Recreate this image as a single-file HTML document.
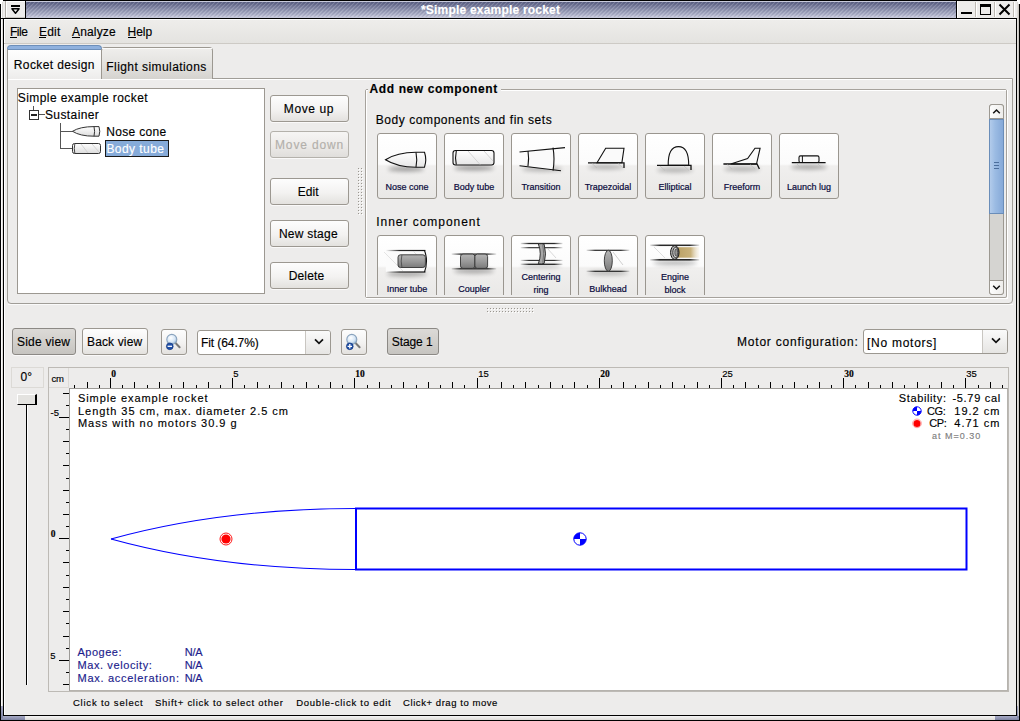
<!DOCTYPE html>
<html><head><meta charset="utf-8">
<style>
*{margin:0;padding:0;box-sizing:border-box}
html,body{width:1020px;height:721px;overflow:hidden;background:#edeceb;font-family:"Liberation Sans",sans-serif;color:#000}
.a{position:absolute}
.t{position:absolute;white-space:pre;line-height:1;font-family:"Liberation Sans",sans-serif;-webkit-text-stroke:0.15px currentColor}
.btn{position:absolute;border:1px solid #9c9891;border-radius:3px;box-shadow:0 1px 0 rgba(255,255,255,0.7);background:linear-gradient(#fdfdfd,#f3f2f1 55%,#e3e1de)}
.dis{background:linear-gradient(#f6f5f4,#eceae8 55%,#e0dedb);border-color:#b4b1ab}
.prs{background:linear-gradient(#dcdad7,#d2d0cc 50%,#c6c4c0);border-color:#8c8985}
.cb{position:absolute;border:1px solid #9c9891;border-radius:3px;background:#fff}
.cbr{position:absolute;border-left:1px solid #c9c6c1;background:linear-gradient(#fafafa,#e6e5e3)}
.comp{position:absolute;width:60px;height:66px;border:1px solid #9a968f;border-radius:3px;background:linear-gradient(#ffffff,#fbfbfb 47%,#f0efee 50%,#e9e8e6)}
.cl{position:absolute;left:0;width:58px;text-align:center;font-size:9px;line-height:1;color:#0a0a3c;white-space:pre;-webkit-text-stroke:0.2px #0a0a3c}
</style></head><body>
<!-- window frame -->
<div class="a" style="left:0;top:0;width:1020px;height:721px;background:#000"></div>
<div class="a" style="left:1px;top:1px;width:1018px;height:719px;background:#fafafa"></div>
<div class="a" style="left:2px;top:1px;width:1016px;height:718px;background:#dddbd8"></div>
<div class="a" style="left:3px;top:1px;width:1014px;height:715px;background:#000"></div>
<div class="a" style="left:4px;top:19px;width:1012px;height:696px;background:#fff"></div>
<div class="a" style="left:5px;top:20px;width:1011px;height:695px;background:#edeceb"></div>
<!-- rounded corners white -->
<div class="a" style="left:0;top:0;width:3px;height:2px;background:#fff"></div>
<div class="a" style="left:0;top:0;width:1px;height:4px;background:#fff"></div>
<div class="a" style="left:1017px;top:0;width:3px;height:2px;background:#fff"></div>
<div class="a" style="left:1019px;top:0;width:1px;height:4px;background:#fff"></div>
<!-- bottom band -->
<div class="a" style="left:1px;top:716px;width:1018px;height:4px;background:linear-gradient(#f4f4f4,#dcdad6)"></div>
<div class="a" style="left:1px;top:716px;width:24px;height:4px;background:linear-gradient(#a8abc6,#7f84a3)"></div>
<div class="a" style="left:995px;top:716px;width:24px;height:4px;background:linear-gradient(#a8abc6,#7f84a3)"></div>
<div class="a" style="left:1px;top:706px;width:2px;height:12px;background:linear-gradient(#a8abc6,#7f84a3)"></div>
<div class="a" style="left:1017px;top:706px;width:2px;height:12px;background:linear-gradient(#a8abc6,#7f84a3)"></div>
<!-- title bar -->
<div class="a" style="left:3px;top:1px;width:1014px;height:17px;background:#edeceb"></div>
<div class="a" style="left:1px;top:1px;width:1px;height:17px;background:#fff"></div>
<div class="a" style="left:5px;top:1px;width:1px;height:17px;background:#b0aca6"></div>
<div class="a" style="left:6px;top:1px;width:19px;height:1px;background:#fff"></div>
<div class="a" style="left:6px;top:1px;width:1px;height:16px;background:#fff"></div>
<div class="a" style="left:6px;top:17px;width:19px;height:1px;background:#c9c6c1"></div>
<div class="a" style="left:0;top:18px;width:1017px;height:1px;background:#000"></div>
<div class="a" style="left:3px;top:18px;width:1px;height:698px;background:#000"></div>
<div class="a" style="left:1016px;top:18px;width:1px;height:698px;background:#000"></div>
<!-- menu icon -->
<div class="a" style="left:11px;top:5px;width:9px;height:2px;background:#000"></div>
<svg class="a" style="left:0;top:0" width="30" height="18" viewBox="0 0 30 18"><path d="M11.9 8.8 L19.1 8.8 L15.5 13.2 Z" fill="none" stroke="#000" stroke-width="1.5" stroke-linejoin="round"/></svg>
<div class="a" style="left:25px;top:1px;width:1px;height:17px;background:#000"></div>
<div class="a" style="left:26px;top:1px;width:930px;height:17px;background:linear-gradient(#c9cbdc 0,#c9cbdc 1px,#5a5f82 1px,#7c809f 6px,#b0b3ca 14px,#c6c8da 16px);"></div>
<div class="a" style="left:26px;top:2px;width:930px;height:15px;background:repeating-linear-gradient(135deg,rgba(255,255,255,0.16) 0,rgba(255,255,255,0.16) 0.9px,rgba(0,0,0,0) 0.9px,rgba(0,0,0,0) 1.6px,rgba(30,34,70,0.08) 1.6px,rgba(30,34,70,0.08) 2.4px,rgba(0,0,0,0) 2.4px,rgba(0,0,0,0) 2.83px)"></div>
<div class="t" style="left:421px;top:3.8px;font-size:12px;font-weight:bold;color:#fff;letter-spacing:0.2px">*Simple example rocket</div>
<div class="a" style="left:956px;top:1px;width:1px;height:17px;background:#000"></div>
<!-- title buttons -->
<div class="a" style="left:957px;top:1px;width:58px;height:17px;background:#edeceb"></div>
<div class="a" style="left:957px;top:1px;width:1px;height:17px;background:#fff"></div>
<div class="a" style="left:975px;top:2px;width:1px;height:15px;background:#bdb9b3"></div>
<div class="a" style="left:976px;top:2px;width:1px;height:15px;background:#fff"></div>
<div class="a" style="left:994px;top:2px;width:1px;height:15px;background:#bdb9b3"></div>
<div class="a" style="left:995px;top:2px;width:1px;height:15px;background:#fff"></div>
<div class="a" style="left:1013px;top:2px;width:1px;height:15px;background:#bdb9b3"></div>
<div class="a" style="left:1014px;top:2px;width:1px;height:15px;background:#fff"></div>
<div class="a" style="left:961px;top:12px;width:11px;height:2px;background:#000"></div>
<div class="a" style="left:980px;top:4px;width:11px;height:11px;border:1px solid #000;border-top-width:3px"></div>
<svg class="a" style="left:998px;top:3px" width="13" height="13" viewBox="0 0 13 13"><path d="M1.5 1.5 L11.5 11.5 M11.5 1.5 L1.5 11.5" stroke="#000" stroke-width="2" /></svg>
<div class="a" style="left:1018px;top:4px;width:1px;height:712px;background:#c9c6c1"></div>
<!-- menu bar -->
<div class="a" style="left:5px;top:20px;width:1011px;height:23px;background:linear-gradient(#eeedeb,#e4e3e0)"></div>
<div class="a" style="left:4px;top:43px;width:1012px;height:1px;background:#cdcac5"></div>
<div class="t" style="left:10px;top:26.4px;font-size:12px;letter-spacing:-0.5px">File</div>
<div class="a" style="left:10px;top:37px;width:7px;height:1px;background:#000"></div>
<div class="t" style="left:39px;top:26.4px;font-size:12px;letter-spacing:0.2px">Edit</div>
<div class="a" style="left:39px;top:37px;width:7px;height:1px;background:#000"></div>
<div class="t" style="left:72px;top:26.4px;font-size:12px;letter-spacing:0.16px">Analyze</div>
<div class="a" style="left:72px;top:37px;width:8px;height:1px;background:#000"></div>
<div class="t" style="left:127.5px;top:26.4px;font-size:12px;letter-spacing:0px">Help</div>
<div class="a" style="left:128px;top:37px;width:8px;height:1px;background:#000"></div>
<!-- tab panel -->
<div class="a" style="left:7px;top:78px;width:1006px;height:226px;border:1px solid #a09d97;border-radius:0 0 4px 4px;background:#edeceb"></div>
<div class="a" style="left:8px;top:79px;width:1004px;height:1px;background:#fff"></div>
<div class="a" style="left:8px;top:304px;width:1005px;height:1px;background:#fafafa"></div>
<!-- second tab -->
<div class="a" style="left:101px;top:47px;width:112px;height:32px;border:1px solid #9c9891;border-bottom:none;border-radius:4px 4px 0 0;background:linear-gradient(#efeeec,#e4e3e0 50%,#d5d3cf)"></div>
<div class="a" style="left:102px;top:48px;width:110px;height:1px;background:#fafafa"></div>
<div class="t" style="left:106.3px;top:60.8px;font-size:12px;letter-spacing:0.43px">Flight simulations</div>
<!-- selected tab -->
<div class="a" style="left:7px;top:45px;width:95px;height:34px;border:1px solid #6d8fba;border-bottom:none;border-radius:4px 4px 0 0;background:linear-gradient(#8fb1de 0,#8fb1de 4px,#fefefe 4px,#f6f6f5 20px,#edeceb 33px)"></div>
<div class="a" style="left:7px;top:49px;width:1px;height:31px;background:#9c9891"></div>
<div class="a" style="left:101px;top:49px;width:1px;height:30px;background:#9c9891"></div>
<div class="a" style="left:8px;top:49px;width:93px;height:1px;background:#6d8fba"></div>
<div class="t" style="left:13.8px;top:59.4px;font-size:12px;letter-spacing:0.39px">Rocket design</div>
<!-- tree -->
<div class="a" style="left:17px;top:88px;width:248px;height:206px;border:1px solid #9c9891;background:#fff"></div>
<!-- tree content -->
<div class="t" style="left:17.8px;top:91.5px;font-size:12px;letter-spacing:0.42px">Simple example rocket</div>
<div class="a" style="left:33px;top:106px;width:1px;height:4px;background:#555"></div>
<div class="a" style="left:29px;top:110px;width:10px;height:10px;border:1px solid #333;background:#fff"></div>
<div class="a" style="left:31px;top:114px;width:6px;height:2px;background:#222"></div>
<div class="a" style="left:39px;top:114px;width:6px;height:1px;background:#555"></div>
<div class="t" style="left:44.9px;top:108.8px;font-size:12px;letter-spacing:0.41px">Sustainer</div>
<div class="a" style="left:60px;top:123px;width:1px;height:26px;background:#555"></div>
<div class="a" style="left:60px;top:131px;width:13px;height:1px;background:#555"></div>
<div class="a" style="left:60px;top:148px;width:13px;height:1px;background:#555"></div>
<svg class="a" style="left:70px;top:124px" width="34" height="34" viewBox="0 0 34 34">
 <defs><linearGradient id="tg" x1="0" y1="0" x2="0" y2="1"><stop offset="0" stop-color="#fff"/><stop offset="1" stop-color="#dcdcdc"/></linearGradient></defs>
 <path d="M2.5 7.3 Q10 2.6 24 2.6 L29 2.6 Q30.5 7.3 29 12.2 L24 12.2 Q10 12.2 2.5 7.3 Z" fill="url(#tg)" stroke="#333" stroke-width="1"/>
 <path d="M24 2.6 Q25.2 7.3 24 12.2" fill="none" stroke="#333" stroke-width="1"/>
 <rect x="2.5" y="19.5" width="28" height="10" rx="2" fill="url(#tg)" stroke="#333" stroke-width="1"/>
 <path d="M4.8 19.8 Q3.8 24.5 4.8 29.2" fill="none" stroke="#333" stroke-width="0.9"/>
 <path d="M11 20 L18 29 M22 20 L29 28" stroke="#ccc" stroke-width="0.8"/>
</svg>
<div class="t" style="left:106.2px;top:125.7px;font-size:12px;letter-spacing:0.34px">Nose cone</div>
<div class="a" style="left:105px;top:140px;width:64px;height:17px;border:1px solid #1a1a1a;background:#86abd9"></div>
<div class="t" style="left:106.4px;top:142.7px;font-size:12px;letter-spacing:0.45px;color:#fff">Body tube</div>
<!-- side buttons -->
<div class="btn" style="left:270px;top:95px;width:79px;height:27px"></div>
<div class="t" style="left:283.8px;top:102.9px;font-size:12px;letter-spacing:0.6px">Move up</div>
<div class="btn dis" style="left:270px;top:131px;width:79px;height:27px"></div>
<div class="t" style="left:275px;top:138.9px;font-size:12px;letter-spacing:0.86px;color:#b3b0ab">Move down</div>
<div class="btn" style="left:270px;top:178px;width:79px;height:27px"></div>
<div class="t" style="left:297.7px;top:185.9px;font-size:12px;letter-spacing:0.1px">Edit</div>
<div class="btn" style="left:270px;top:220px;width:79px;height:27px"></div>
<div class="t" style="left:278.9px;top:227.9px;font-size:12px;letter-spacing:0.25px">New stage</div>
<div class="btn" style="left:270px;top:262px;width:79px;height:27px"></div>
<div class="t" style="left:288.7px;top:269.9px;font-size:12px;letter-spacing:0.16px">Delete</div>
<!-- splitter dots -->
<svg class="a" style="left:0;top:0" width="1020" height="330" viewBox="0 0 1020 330" shape-rendering="crispEdges">
<rect x="359" y="169" width="1" height="1" fill="#fff"/><rect x="358" y="168" width="1" height="1" fill="#9a968f"/>
<rect x="359" y="172" width="1" height="1" fill="#fff"/><rect x="358" y="171" width="1" height="1" fill="#9a968f"/>
<rect x="359" y="175" width="1" height="1" fill="#fff"/><rect x="358" y="174" width="1" height="1" fill="#9a968f"/>
<rect x="359" y="178" width="1" height="1" fill="#fff"/><rect x="358" y="177" width="1" height="1" fill="#9a968f"/>
<rect x="359" y="181" width="1" height="1" fill="#fff"/><rect x="358" y="180" width="1" height="1" fill="#9a968f"/>
<rect x="359" y="184" width="1" height="1" fill="#fff"/><rect x="358" y="183" width="1" height="1" fill="#9a968f"/>
<rect x="359" y="187" width="1" height="1" fill="#fff"/><rect x="358" y="186" width="1" height="1" fill="#9a968f"/>
<rect x="359" y="190" width="1" height="1" fill="#fff"/><rect x="358" y="189" width="1" height="1" fill="#9a968f"/>
<rect x="359" y="193" width="1" height="1" fill="#fff"/><rect x="358" y="192" width="1" height="1" fill="#9a968f"/>
<rect x="359" y="196" width="1" height="1" fill="#fff"/><rect x="358" y="195" width="1" height="1" fill="#9a968f"/>
<rect x="359" y="199" width="1" height="1" fill="#fff"/><rect x="358" y="198" width="1" height="1" fill="#9a968f"/>
<rect x="359" y="202" width="1" height="1" fill="#fff"/><rect x="358" y="201" width="1" height="1" fill="#9a968f"/>
<rect x="359" y="205" width="1" height="1" fill="#fff"/><rect x="358" y="204" width="1" height="1" fill="#9a968f"/>
<rect x="359" y="208" width="1" height="1" fill="#fff"/><rect x="358" y="207" width="1" height="1" fill="#9a968f"/>
<rect x="359" y="211" width="1" height="1" fill="#fff"/><rect x="358" y="210" width="1" height="1" fill="#9a968f"/>
<rect x="359" y="214" width="1" height="1" fill="#fff"/><rect x="358" y="213" width="1" height="1" fill="#9a968f"/>
<rect x="362" y="169" width="1" height="1" fill="#fff"/><rect x="361" y="168" width="1" height="1" fill="#9a968f"/>
<rect x="362" y="172" width="1" height="1" fill="#fff"/><rect x="361" y="171" width="1" height="1" fill="#9a968f"/>
<rect x="362" y="175" width="1" height="1" fill="#fff"/><rect x="361" y="174" width="1" height="1" fill="#9a968f"/>
<rect x="362" y="178" width="1" height="1" fill="#fff"/><rect x="361" y="177" width="1" height="1" fill="#9a968f"/>
<rect x="362" y="181" width="1" height="1" fill="#fff"/><rect x="361" y="180" width="1" height="1" fill="#9a968f"/>
<rect x="362" y="184" width="1" height="1" fill="#fff"/><rect x="361" y="183" width="1" height="1" fill="#9a968f"/>
<rect x="362" y="187" width="1" height="1" fill="#fff"/><rect x="361" y="186" width="1" height="1" fill="#9a968f"/>
<rect x="362" y="190" width="1" height="1" fill="#fff"/><rect x="361" y="189" width="1" height="1" fill="#9a968f"/>
<rect x="362" y="193" width="1" height="1" fill="#fff"/><rect x="361" y="192" width="1" height="1" fill="#9a968f"/>
<rect x="362" y="196" width="1" height="1" fill="#fff"/><rect x="361" y="195" width="1" height="1" fill="#9a968f"/>
<rect x="362" y="199" width="1" height="1" fill="#fff"/><rect x="361" y="198" width="1" height="1" fill="#9a968f"/>
<rect x="362" y="202" width="1" height="1" fill="#fff"/><rect x="361" y="201" width="1" height="1" fill="#9a968f"/>
<rect x="362" y="205" width="1" height="1" fill="#fff"/><rect x="361" y="204" width="1" height="1" fill="#9a968f"/>
<rect x="362" y="208" width="1" height="1" fill="#fff"/><rect x="361" y="207" width="1" height="1" fill="#9a968f"/>
<rect x="362" y="211" width="1" height="1" fill="#fff"/><rect x="361" y="210" width="1" height="1" fill="#9a968f"/>
<rect x="362" y="214" width="1" height="1" fill="#fff"/><rect x="361" y="213" width="1" height="1" fill="#9a968f"/>
<rect x="488" y="309" width="1" height="1" fill="#fff"/><rect x="487" y="308" width="1" height="1" fill="#9a968f"/>
<rect x="491" y="309" width="1" height="1" fill="#fff"/><rect x="490" y="308" width="1" height="1" fill="#9a968f"/>
<rect x="494" y="309" width="1" height="1" fill="#fff"/><rect x="493" y="308" width="1" height="1" fill="#9a968f"/>
<rect x="497" y="309" width="1" height="1" fill="#fff"/><rect x="496" y="308" width="1" height="1" fill="#9a968f"/>
<rect x="500" y="309" width="1" height="1" fill="#fff"/><rect x="499" y="308" width="1" height="1" fill="#9a968f"/>
<rect x="503" y="309" width="1" height="1" fill="#fff"/><rect x="502" y="308" width="1" height="1" fill="#9a968f"/>
<rect x="506" y="309" width="1" height="1" fill="#fff"/><rect x="505" y="308" width="1" height="1" fill="#9a968f"/>
<rect x="509" y="309" width="1" height="1" fill="#fff"/><rect x="508" y="308" width="1" height="1" fill="#9a968f"/>
<rect x="512" y="309" width="1" height="1" fill="#fff"/><rect x="511" y="308" width="1" height="1" fill="#9a968f"/>
<rect x="515" y="309" width="1" height="1" fill="#fff"/><rect x="514" y="308" width="1" height="1" fill="#9a968f"/>
<rect x="518" y="309" width="1" height="1" fill="#fff"/><rect x="517" y="308" width="1" height="1" fill="#9a968f"/>
<rect x="521" y="309" width="1" height="1" fill="#fff"/><rect x="520" y="308" width="1" height="1" fill="#9a968f"/>
<rect x="524" y="309" width="1" height="1" fill="#fff"/><rect x="523" y="308" width="1" height="1" fill="#9a968f"/>
<rect x="527" y="309" width="1" height="1" fill="#fff"/><rect x="526" y="308" width="1" height="1" fill="#9a968f"/>
<rect x="530" y="309" width="1" height="1" fill="#fff"/><rect x="529" y="308" width="1" height="1" fill="#9a968f"/>
<rect x="533" y="309" width="1" height="1" fill="#fff"/><rect x="532" y="308" width="1" height="1" fill="#9a968f"/>
<rect x="488" y="312" width="1" height="1" fill="#fff"/><rect x="487" y="311" width="1" height="1" fill="#9a968f"/>
<rect x="491" y="312" width="1" height="1" fill="#fff"/><rect x="490" y="311" width="1" height="1" fill="#9a968f"/>
<rect x="494" y="312" width="1" height="1" fill="#fff"/><rect x="493" y="311" width="1" height="1" fill="#9a968f"/>
<rect x="497" y="312" width="1" height="1" fill="#fff"/><rect x="496" y="311" width="1" height="1" fill="#9a968f"/>
<rect x="500" y="312" width="1" height="1" fill="#fff"/><rect x="499" y="311" width="1" height="1" fill="#9a968f"/>
<rect x="503" y="312" width="1" height="1" fill="#fff"/><rect x="502" y="311" width="1" height="1" fill="#9a968f"/>
<rect x="506" y="312" width="1" height="1" fill="#fff"/><rect x="505" y="311" width="1" height="1" fill="#9a968f"/>
<rect x="509" y="312" width="1" height="1" fill="#fff"/><rect x="508" y="311" width="1" height="1" fill="#9a968f"/>
<rect x="512" y="312" width="1" height="1" fill="#fff"/><rect x="511" y="311" width="1" height="1" fill="#9a968f"/>
<rect x="515" y="312" width="1" height="1" fill="#fff"/><rect x="514" y="311" width="1" height="1" fill="#9a968f"/>
<rect x="518" y="312" width="1" height="1" fill="#fff"/><rect x="517" y="311" width="1" height="1" fill="#9a968f"/>
<rect x="521" y="312" width="1" height="1" fill="#fff"/><rect x="520" y="311" width="1" height="1" fill="#9a968f"/>
<rect x="524" y="312" width="1" height="1" fill="#fff"/><rect x="523" y="311" width="1" height="1" fill="#9a968f"/>
<rect x="527" y="312" width="1" height="1" fill="#fff"/><rect x="526" y="311" width="1" height="1" fill="#9a968f"/>
<rect x="530" y="312" width="1" height="1" fill="#fff"/><rect x="529" y="311" width="1" height="1" fill="#9a968f"/>
<rect x="533" y="312" width="1" height="1" fill="#fff"/><rect x="532" y="311" width="1" height="1" fill="#9a968f"/>
</svg>
<!-- group box -->
<div class="a" style="left:365px;top:89px;width:642px;height:209px;border:1px solid #a6a29c;border-radius:2px"></div>
<div class="a" style="left:366px;top:90px;width:640px;height:207px;border-left:1px solid #fff;border-top:1px solid #fff"></div>
<div class="a" style="left:366px;top:298px;width:642px;height:1px;background:#fff"></div>
<div class="a" style="left:1007px;top:90px;width:1px;height:208px;background:#fff"></div>
<div class="a" style="left:368px;top:82px;width:133px;height:14px;background:#edeceb"></div>
<div class="t" style="left:369.6px;top:82.7px;font-size:12px;font-weight:bold;letter-spacing:0.6px">Add new component</div>
<div class="t" style="left:375.8px;top:113.8px;font-size:12px;letter-spacing:0.56px">Body components and fin sets</div>
<div class="t" style="left:376.2px;top:215.7px;font-size:12px;letter-spacing:0.97px">Inner component</div>
<svg width="0" height="0" style="position:absolute"><defs>
<filter id="blr" x="-50%" y="-200%" width="200%" height="500%"><feGaussianBlur stdDeviation="2.2"/></filter>
<linearGradient id="wg" x1="0" y1="0" x2="0" y2="1"><stop offset="0" stop-color="#fff"/><stop offset="1" stop-color="#e6e6e6"/></linearGradient>
<linearGradient id="gg" x1="0" y1="0" x2="0" y2="1"><stop offset="0" stop-color="#b5b5b5"/><stop offset="0.5" stop-color="#9a9a9a"/><stop offset="1" stop-color="#7a7a7a"/></linearGradient>
<linearGradient id="fl" x1="0" y1="0" x2="1" y2="0"><stop offset="0" stop-color="#111" stop-opacity="0"/><stop offset="0.35" stop-color="#111" stop-opacity="0.9"/><stop offset="1" stop-color="#111"/></linearGradient>
<linearGradient id="fl2" x1="0" y1="0" x2="1" y2="0"><stop offset="0" stop-color="#111" stop-opacity="0.1"/><stop offset="0.2" stop-color="#111" stop-opacity="0.9"/><stop offset="0.8" stop-color="#111" stop-opacity="0.9"/><stop offset="1" stop-color="#111" stop-opacity="0.1"/></linearGradient>
<linearGradient id="tan" x1="0" y1="0" x2="1" y2="0"><stop offset="0" stop-color="#bba268"/><stop offset="0.6" stop-color="#c9b27c"/><stop offset="1" stop-color="#f5efe2" stop-opacity="0.4"/></linearGradient>
</defs></svg>
<div class="a" style="left:367px;top:98px;width:621px;height:197px;overflow:hidden">
<div class="comp" style="left:10px;top:35px"><svg class="a" style="left:-1px;top:-1px" width="60" height="66" viewBox="0 0 60 66"><ellipse cx="29" cy="36" rx="18" ry="2.5" fill="#000" opacity="0.35" filter="url(#blr)"/>
<path d="M8.5 26.7 Q20 19.5 39 19.3 L47.5 19.3 Q50 26.7 47.5 34.2 L39 34.2 Q20 34 8.5 26.7 Z" fill="url(#wg)" stroke="#111" stroke-width="1.1"/>
<path d="M39 19.3 Q40.5 26.7 39 34.2" stroke="#111" stroke-width="1.1" fill="none"/></svg><div class="cl" style="top:49.28px">Nose cone</div></div>
<div class="comp" style="left:77px;top:35px"><svg class="a" style="left:-1px;top:-1px" width="60" height="66" viewBox="0 0 60 66"><ellipse cx="30" cy="35" rx="20" ry="2.5" fill="#000" opacity="0.35" filter="url(#blr)"/>
<rect x="9" y="17.5" width="41" height="14.5" rx="2.5" fill="url(#wg)" stroke="#111" stroke-width="1.1"/>
<path d="M12.3 17.8 Q10.8 24.7 12.3 31.7" stroke="#111" stroke-width="1.1" fill="none"/>
<path d="M24 18 L36 31.5 M40 18 L49 28" stroke="#ccc" stroke-width="0.8"/></svg><div class="cl" style="top:49.28px">Body tube</div></div>
<div class="comp" style="left:144px;top:35px"><svg class="a" style="left:-1px;top:-1px" width="60" height="66" viewBox="0 0 60 66"><ellipse cx="31" cy="36" rx="20" ry="2.5" fill="#000" opacity="0.25" filter="url(#blr)"/>
<path d="M17 17.5 L42 14.8 L42 37.5 L17 33.2 Z" fill="#fafafa"/>
<path d="M8.5 19 L54 14.6" stroke="#111" stroke-width="1.1"/>
<path d="M8.5 32.8 L50 37.7" stroke="#111" stroke-width="1.1"/>
<path d="M17 18 Q18.2 25.5 17 33" stroke="#111" stroke-width="1.1" fill="none"/>
<path d="M42 14.7 Q44 26 42 37.6" stroke="#111" stroke-width="1.1" fill="none"/></svg><div class="cl" style="top:49.28px">Transition</div></div>
<div class="comp" style="left:211px;top:35px"><svg class="a" style="left:-1px;top:-1px" width="60" height="66" viewBox="0 0 60 66"><ellipse cx="28" cy="34" rx="18" ry="2.5" fill="#000" opacity="0.25" filter="url(#blr)"/>
<path d="M19 29.7 L27.7 15.3 L46 15.3 L43.9 29.7 Z" fill="#fafafa" stroke="#111" stroke-width="1.1"/>
<path d="M10 29.8 L46 29.8 L46 35" stroke="#111" stroke-width="1.3" fill="none"/>
<path d="M14 30.5 L19 35 M40 30.5 L45 35" stroke="#bbb" stroke-width="0.7"/></svg><div class="cl" style="top:49.28px">Trapezoidal</div></div>
<div class="comp" style="left:278px;top:35px"><svg class="a" style="left:-1px;top:-1px" width="60" height="66" viewBox="0 0 60 66"><ellipse cx="30" cy="37" rx="18" ry="2.5" fill="#000" opacity="0.25" filter="url(#blr)"/>
<path d="M23.2 32.3 Q23 13.6 33.5 13.6 Q43.8 13.6 43.7 32.3 Z" fill="#fafafa" stroke="#111" stroke-width="1.1"/>
<path d="M12 32.3 L46 32.3 L46 37" stroke="#111" stroke-width="1.3" fill="none"/>
<path d="M15 33 L20 37.5 M39 33 L44 37.5" stroke="#bbb" stroke-width="0.7"/></svg><div class="cl" style="top:49.28px">Elliptical</div></div>
<div class="comp" style="left:345px;top:35px"><svg class="a" style="left:-1px;top:-1px" width="60" height="66" viewBox="0 0 60 66"><ellipse cx="30" cy="36" rx="18" ry="2.5" fill="#000" opacity="0.25" filter="url(#blr)"/>
<path d="M18.7 31 L35.6 25.5 L43 15.2 L48.1 15.2 L44.5 31 Z" fill="#fafafa" stroke="#111" stroke-width="1.1"/>
<path d="M11.4 31 L45 31 L47.4 36" stroke="#111" stroke-width="1.3" fill="none"/>
<path d="M15 31.5 L20 36 M38 31.5 L43 36" stroke="#bbb" stroke-width="0.7"/></svg><div class="cl" style="top:49.28px">Freeform</div></div>
<div class="comp" style="left:412px;top:35px"><svg class="a" style="left:-1px;top:-1px" width="60" height="66" viewBox="0 0 60 66"><ellipse cx="30" cy="34" rx="18" ry="2.5" fill="#000" opacity="0.3" filter="url(#blr)"/>
<rect x="20" y="22.9" width="20" height="6.6" rx="1.5" fill="#fafafa" stroke="#111" stroke-width="1.1"/>
<path d="M23.4 23 L23.4 29.5" stroke="#111" stroke-width="1"/>
<path d="M12.8 29.6 L46.6 29.6" stroke="#111" stroke-width="1.2"/>
<path d="M17 30 L21 34 M38 30 L42 34" stroke="#bbb" stroke-width="0.7"/></svg><div class="cl" style="top:49.28px">Launch lug</div></div>
<div class="comp" style="left:10px;top:137px"><svg class="a" style="left:-1px;top:-1px" width="60" height="66" viewBox="0 0 60 66"><ellipse cx="30" cy="39" rx="20" ry="2.5" fill="#000" opacity="0.3" filter="url(#blr)"/>
<path d="M8.9 15.5 L48 15.5 Q51 26 48 37 L8.9 37" fill="#fbfbfb" stroke="none"/>
<rect x="8.9" y="14.9" width="39.5" height="1.2" fill="url(#fl)"/><rect x="8.9" y="36.4" width="39.5" height="1.2" fill="url(#fl)"/>
<path d="M47.5 15.5 Q51.5 26 47.5 37" stroke="#111" stroke-width="1.1" fill="none"/>
<path d="M7 17 L26 36 M36 16 L47 27" stroke="#d8d8d8" stroke-width="0.7"/>
<rect x="21" y="19.8" width="27.4" height="12.7" rx="2.5" fill="url(#gg)" stroke="#333" stroke-width="0.9"/>
<path d="M24.9 20 Q23.5 26 24.9 32.3" stroke="#444" stroke-width="0.8" fill="none"/></svg><div class="cl" style="top:48.88px">Inner tube</div></div>
<div class="comp" style="left:77px;top:137px"><svg class="a" style="left:-1px;top:-1px" width="60" height="66" viewBox="0 0 60 66"><ellipse cx="30" cy="36" rx="20" ry="2.5" fill="#000" opacity="0.3" filter="url(#blr)"/><rect x="7.6" y="18.450000000000003" width="44.6" height="1.3" fill="url(#fl2)"/><rect x="7.6" y="33.15" width="44.6" height="1.3" fill="url(#fl2)"/>
<rect x="16.5" y="19.1" width="14.4" height="14.3" rx="2.5" fill="url(#gg)" stroke="#333" stroke-width="0.9"/>
<rect x="30.9" y="19.1" width="12.7" height="14.3" rx="2.5" fill="url(#gg)" stroke="#333" stroke-width="0.9"/></svg><div class="cl" style="top:48.88px">Coupler</div></div>
<div class="comp" style="left:144px;top:137px"><svg class="a" style="left:-1px;top:-1px" width="60" height="66" viewBox="0 0 60 66"><ellipse cx="30" cy="31" rx="20" ry="2" fill="#000" opacity="0.2" filter="url(#blr)"/><rect x="9.6" y="7.85" width="42.0" height="1.3" fill="url(#fl2)"/><rect x="9.6" y="12.149999999999999" width="42.0" height="1.1" fill="url(#fl2)"/><rect x="9.6" y="24.849999999999998" width="42.0" height="1.1" fill="url(#fl2)"/><rect x="9.6" y="28.650000000000002" width="42.0" height="1.3" fill="url(#fl2)"/>
<path d="M36 13 L45 23" stroke="#c8c8c8" stroke-width="0.7"/>
<path d="M27.3 8.8 Q31 8.3 33.2 9.3 Q35.8 18.8 33.2 28.3 Q31 29.3 27.3 28.8 Q31.2 18.8 27.3 8.8 Z" fill="#a8a8a8" stroke="#222" stroke-width="0.9"/>
<path d="M31.8 10 Q33.6 18.8 31.8 27.6" stroke="#666" stroke-width="0.8" fill="none"/></svg><div class="cl" style="top:37.28px">Centering</div><div class="cl" style="top:49.58px">ring</div></div>
<div class="comp" style="left:211px;top:137px"><svg class="a" style="left:-1px;top:-1px" width="60" height="66" viewBox="0 0 60 66"><ellipse cx="30" cy="38" rx="20" ry="2" fill="#000" opacity="0.25" filter="url(#blr)"/><rect x="8.5" y="14.700000000000001" width="43.0" height="1.2" fill="url(#fl2)"/><rect x="8.5" y="35.699999999999996" width="43.0" height="1.2" fill="url(#fl2)"/>
<ellipse cx="30.3" cy="25.8" rx="4" ry="10.5" fill="url(#gg)" stroke="#333" stroke-width="0.9"/>
<path d="M35 17 L45 30" stroke="#bbb" stroke-width="0.7"/></svg><div class="cl" style="top:48.88px">Bulkhead</div></div>
<div class="comp" style="left:278px;top:137px"><svg class="a" style="left:-1px;top:-1px" width="60" height="66" viewBox="0 0 60 66"><ellipse cx="30" cy="28" rx="22" ry="2" fill="#000" opacity="0.3" filter="url(#blr)"/>
<path d="M9 12 L20 23" stroke="#d0d0d0" stroke-width="0.7"/>
<rect x="33" y="12.2" width="21.3" height="10.5" fill="url(#tan)"/>
<rect x="5.1" y="9.55" width="49.199999999999996" height="1.5" fill="url(#fl2)"/><rect x="5.1" y="24.0" width="49.199999999999996" height="1.6" fill="url(#fl2)"/>
<ellipse cx="29.8" cy="17.5" rx="4.2" ry="6.9" fill="#b8b8b8" stroke="#111" stroke-width="1"/>
<ellipse cx="30.6" cy="17.5" rx="2.8" ry="5.2" fill="#d0d0d0" stroke="#222" stroke-width="0.9"/>
<ellipse cx="31.2" cy="17.5" rx="1.4" ry="3.6" fill="#999" stroke="#333" stroke-width="0.7"/></svg><div class="cl" style="top:37.28px">Engine</div><div class="cl" style="top:49.58px">block</div></div>
</div>
<div class="a" style="left:989px;top:104px;width:15px;height:191px;border:1px solid #9c9891;border-radius:3px;background:#d5d4d1"></div>
<div class="a" style="left:989px;top:104px;width:15px;height:15px;border:1px solid #9c9891;border-radius:3px 3px 0 0;background:linear-gradient(90deg,#fdfdfd,#eeedeb)"></div>
<svg class="a" style="left:991px;top:107px" width="11" height="9" viewBox="0 0 11 9"><path d="M2.2 6.2 L5.5 3 L8.8 6.2" fill="none" stroke="#111" stroke-width="1.5"/></svg>
<div class="a" style="left:989px;top:119px;width:15px;height:95px;border:1px solid #6a8db9;background:linear-gradient(90deg,#b2cbeb,#9bbbe3 40%,#86a9d8)"></div>
<div class="a" style="left:994px;top:162px;width:5px;height:1px;background:#4c6e9c"></div>
<div class="a" style="left:994px;top:165px;width:5px;height:1px;background:#4c6e9c"></div>
<div class="a" style="left:994px;top:168px;width:5px;height:1px;background:#4c6e9c"></div>
<div class="a" style="left:989px;top:280px;width:15px;height:15px;border:1px solid #9c9891;border-radius:0 0 3px 3px;background:linear-gradient(90deg,#fdfdfd,#eeedeb)"></div>
<svg class="a" style="left:991px;top:283px" width="11" height="9" viewBox="0 0 11 9"><path d="M2.2 2.8 L5.5 6 L8.8 2.8" fill="none" stroke="#111" stroke-width="1.5"/></svg>
<div class="btn prs" style="left:12px;top:328px;width:64px;height:27px"></div>
<div class="t" style="left:17.0px;top:335.84px;font-size:12px;letter-spacing:0.21px;">Side view</div>
<div class="btn" style="left:82px;top:328px;width:66px;height:27px"></div>
<div class="t" style="left:87.0px;top:335.84px;font-size:12px;letter-spacing:0.14px;">Back view</div>
<div class="btn" style="left:161px;top:329px;width:26px;height:26px"></div>
<svg class="a" style="left:164px;top:332px" width="20" height="20" viewBox="0 0 20 20">
<defs><radialGradient id="lens0" cx="0.4" cy="0.35" r="0.7"><stop offset="0" stop-color="#ffffff"/><stop offset="0.6" stop-color="#d6e6f6"/><stop offset="1" stop-color="#8fb0d0"/></radialGradient></defs>
<path d="M11.3 10.8 L15.6 15.2" stroke="#777" stroke-width="2" stroke-linecap="round"/>
<circle cx="7.8" cy="7.4" r="5" fill="url(#lens0)" stroke="#8aa3bd" stroke-width="1.1"/>
<circle cx="5.8" cy="14.3" r="3.4" fill="#1f4fa8" stroke="#0d2f74" stroke-width="0.6"/>
<path d="M3.6 14.3 h4.4" stroke="#fff" stroke-width="1.3"/>
</svg>
<div class="btn" style="left:341px;top:329px;width:26px;height:26px"></div>
<svg class="a" style="left:344px;top:332px" width="20" height="20" viewBox="0 0 20 20">
<defs><radialGradient id="lens1" cx="0.4" cy="0.35" r="0.7"><stop offset="0" stop-color="#ffffff"/><stop offset="0.6" stop-color="#d6e6f6"/><stop offset="1" stop-color="#8fb0d0"/></radialGradient></defs>
<path d="M11.3 10.8 L15.6 15.2" stroke="#777" stroke-width="2" stroke-linecap="round"/>
<circle cx="7.8" cy="7.4" r="5" fill="url(#lens1)" stroke="#8aa3bd" stroke-width="1.1"/>
<circle cx="5.8" cy="14.3" r="3.4" fill="#1f4fa8" stroke="#0d2f74" stroke-width="0.6"/>
<path d="M3.6 14.3 h4.4 M5.8 12.1 v4.4" stroke="#fff" stroke-width="1.3"/>
</svg>
<div class="cb" style="left:197px;top:330px;width:134px;height:25px"></div>
<div class="cbr" style="left:305px;top:331px;width:25px;height:23px;border-radius:0 2px 2px 0"></div>
<svg class="a" style="left:313px;top:336px" width="12" height="12" viewBox="0 0 12 12"><path d="M2 3.3 L6 7.3 L10 3.3" fill="none" stroke="#111" stroke-width="1.7"/></svg>
<div class="t" style="left:201.0px;top:336.64px;font-size:12px;letter-spacing:-0.09px;">Fit (64.7%)</div>
<div class="btn prs" style="left:387px;top:328px;width:52px;height:27px"></div>
<div class="t" style="left:391.8px;top:336.04px;font-size:12px;letter-spacing:-0.1px;">Stage 1</div>
<div class="t" style="left:737.1px;top:335.84px;font-size:12px;letter-spacing:0.77px;">Motor configuration:</div>
<div class="cb" style="left:863px;top:329px;width:145px;height:25px"></div>
<div class="cbr" style="left:982px;top:330px;width:25px;height:23px;border-radius:0 2px 2px 0"></div>
<svg class="a" style="left:990px;top:335px" width="12" height="12" viewBox="0 0 12 12"><path d="M2 3.3 L6 7.3 L10 3.3" fill="none" stroke="#111" stroke-width="1.7"/></svg>
<div class="t" style="left:866.9px;top:336.54px;font-size:12px;letter-spacing:0.75px;">[No motors]</div>
<div class="a" style="left:11px;top:367px;width:33px;height:21px;border:1px solid #dcdad6;background:#edeceb"></div>
<div class="t" style="left:20.4px;top:370.84px;font-size:12px;letter-spacing:0.3px;">0°</div>
<div class="a" style="left:26px;top:404px;width:1px;height:281px;background:#000"></div>
<div class="a" style="left:27px;top:405px;width:1px;height:280px;background:#fff"></div>
<div class="a" style="left:17px;top:394px;width:20px;height:11px;background:#e4e3e0;border-top:1px solid #fff;border-left:1px solid #fff;border-right:2px solid #000;border-bottom:1px solid #000"></div>
<div class="a" style="left:48px;top:367px;width:961px;height:325px;border:1px solid #bdbab5;background:#edeceb"></div>
<div class="a" style="left:68px;top:368px;width:1px;height:20px;background:#dcdad6"></div>
<div class="a" style="left:49px;top:387px;width:20px;height:1px;background:#dcdad6"></div>
<div class="t" style="left:51.5px;top:373.6px;font-size:9.5px;letter-spacing:-0.2px">cm</div>
<div class="a" style="left:69px;top:388px;width:939px;height:303px;background:#fff;border-left:1px solid #9c9a96;border-top:1px solid #9c9a96;border-right:1px solid #b6b3ae;border-bottom:1px solid #b6b3ae"></div>
<svg class="a" style="left:0;top:0" width="1020" height="721" viewBox="0 0 1020 721" shape-rendering="crispEdges">
<rect x="74" y="385" width="1" height="3" fill="#000"/>
<rect x="87" y="382" width="1" height="6" fill="#000"/>
<rect x="99" y="385" width="1" height="3" fill="#000"/>
<rect x="110" y="378" width="1" height="10" fill="#000"/>
<rect x="122" y="385" width="1" height="3" fill="#000"/>
<rect x="134" y="382" width="1" height="6" fill="#000"/>
<rect x="147" y="385" width="1" height="3" fill="#000"/>
<rect x="159" y="382" width="1" height="6" fill="#000"/>
<rect x="171" y="385" width="1" height="3" fill="#000"/>
<rect x="183" y="382" width="1" height="6" fill="#000"/>
<rect x="196" y="385" width="1" height="3" fill="#000"/>
<rect x="208" y="382" width="1" height="6" fill="#000"/>
<rect x="220" y="385" width="1" height="3" fill="#000"/>
<rect x="232" y="378" width="1" height="10" fill="#000"/>
<rect x="244" y="385" width="1" height="3" fill="#000"/>
<rect x="257" y="382" width="1" height="6" fill="#000"/>
<rect x="269" y="385" width="1" height="3" fill="#000"/>
<rect x="281" y="382" width="1" height="6" fill="#000"/>
<rect x="293" y="385" width="1" height="3" fill="#000"/>
<rect x="306" y="382" width="1" height="6" fill="#000"/>
<rect x="318" y="385" width="1" height="3" fill="#000"/>
<rect x="330" y="382" width="1" height="6" fill="#000"/>
<rect x="342" y="385" width="1" height="3" fill="#000"/>
<rect x="354" y="378" width="1" height="10" fill="#000"/>
<rect x="367" y="385" width="1" height="3" fill="#000"/>
<rect x="379" y="382" width="1" height="6" fill="#000"/>
<rect x="391" y="385" width="1" height="3" fill="#000"/>
<rect x="403" y="382" width="1" height="6" fill="#000"/>
<rect x="416" y="385" width="1" height="3" fill="#000"/>
<rect x="428" y="382" width="1" height="6" fill="#000"/>
<rect x="440" y="385" width="1" height="3" fill="#000"/>
<rect x="452" y="382" width="1" height="6" fill="#000"/>
<rect x="464" y="385" width="1" height="3" fill="#000"/>
<rect x="477" y="378" width="1" height="10" fill="#000"/>
<rect x="489" y="385" width="1" height="3" fill="#000"/>
<rect x="501" y="382" width="1" height="6" fill="#000"/>
<rect x="513" y="385" width="1" height="3" fill="#000"/>
<rect x="525" y="382" width="1" height="6" fill="#000"/>
<rect x="538" y="385" width="1" height="3" fill="#000"/>
<rect x="550" y="382" width="1" height="6" fill="#000"/>
<rect x="562" y="385" width="1" height="3" fill="#000"/>
<rect x="574" y="382" width="1" height="6" fill="#000"/>
<rect x="587" y="385" width="1" height="3" fill="#000"/>
<rect x="599" y="378" width="1" height="10" fill="#000"/>
<rect x="611" y="385" width="1" height="3" fill="#000"/>
<rect x="623" y="382" width="1" height="6" fill="#000"/>
<rect x="635" y="385" width="1" height="3" fill="#000"/>
<rect x="648" y="382" width="1" height="6" fill="#000"/>
<rect x="660" y="385" width="1" height="3" fill="#000"/>
<rect x="672" y="382" width="1" height="6" fill="#000"/>
<rect x="684" y="385" width="1" height="3" fill="#000"/>
<rect x="697" y="382" width="1" height="6" fill="#000"/>
<rect x="709" y="385" width="1" height="3" fill="#000"/>
<rect x="721" y="378" width="1" height="10" fill="#000"/>
<rect x="733" y="385" width="1" height="3" fill="#000"/>
<rect x="745" y="382" width="1" height="6" fill="#000"/>
<rect x="758" y="385" width="1" height="3" fill="#000"/>
<rect x="770" y="382" width="1" height="6" fill="#000"/>
<rect x="782" y="385" width="1" height="3" fill="#000"/>
<rect x="794" y="382" width="1" height="6" fill="#000"/>
<rect x="807" y="385" width="1" height="3" fill="#000"/>
<rect x="819" y="382" width="1" height="6" fill="#000"/>
<rect x="831" y="385" width="1" height="3" fill="#000"/>
<rect x="843" y="378" width="1" height="10" fill="#000"/>
<rect x="855" y="385" width="1" height="3" fill="#000"/>
<rect x="868" y="382" width="1" height="6" fill="#000"/>
<rect x="880" y="385" width="1" height="3" fill="#000"/>
<rect x="892" y="382" width="1" height="6" fill="#000"/>
<rect x="904" y="385" width="1" height="3" fill="#000"/>
<rect x="917" y="382" width="1" height="6" fill="#000"/>
<rect x="929" y="385" width="1" height="3" fill="#000"/>
<rect x="941" y="382" width="1" height="6" fill="#000"/>
<rect x="953" y="385" width="1" height="3" fill="#000"/>
<rect x="965" y="378" width="1" height="10" fill="#000"/>
<rect x="978" y="385" width="1" height="3" fill="#000"/>
<rect x="990" y="382" width="1" height="6" fill="#000"/>
<rect x="1002" y="385" width="1" height="3" fill="#000"/>
<rect x="63" y="393" width="6" height="1" fill="#000"/>
<rect x="66" y="405" width="3" height="1" fill="#000"/>
<rect x="59" y="417" width="10" height="1" fill="#000"/>
<rect x="66" y="429" width="3" height="1" fill="#000"/>
<rect x="63" y="441" width="6" height="1" fill="#000"/>
<rect x="66" y="453" width="3" height="1" fill="#000"/>
<rect x="63" y="465" width="6" height="1" fill="#000"/>
<rect x="66" y="478" width="3" height="1" fill="#000"/>
<rect x="63" y="490" width="6" height="1" fill="#000"/>
<rect x="66" y="502" width="3" height="1" fill="#000"/>
<rect x="63" y="514" width="6" height="1" fill="#000"/>
<rect x="66" y="526" width="3" height="1" fill="#000"/>
<rect x="59" y="538" width="10" height="1" fill="#000"/>
<rect x="66" y="550" width="3" height="1" fill="#000"/>
<rect x="63" y="562" width="6" height="1" fill="#000"/>
<rect x="66" y="575" width="3" height="1" fill="#000"/>
<rect x="63" y="587" width="6" height="1" fill="#000"/>
<rect x="66" y="599" width="3" height="1" fill="#000"/>
<rect x="63" y="611" width="6" height="1" fill="#000"/>
<rect x="66" y="623" width="3" height="1" fill="#000"/>
<rect x="63" y="636" width="6" height="1" fill="#000"/>
<rect x="66" y="648" width="3" height="1" fill="#000"/>
<rect x="59" y="660" width="10" height="1" fill="#000"/>
<rect x="66" y="672" width="3" height="1" fill="#000"/>
<rect x="63" y="684" width="6" height="1" fill="#000"/>
</svg>
<div class="t" style="left:111.2px;top:369.6px;font-size:9.5px;font-weight:bold;font-family:'Liberation Serif',serif">0</div>
<div class="t" style="left:233.2px;top:369.3px;font-size:9.5px">5</div>
<div class="t" style="left:355.2px;top:369.6px;font-size:9.5px;font-weight:bold;font-family:'Liberation Serif',serif">10</div>
<div class="t" style="left:478.2px;top:369.3px;font-size:9.5px">15</div>
<div class="t" style="left:600.2px;top:369.6px;font-size:9.5px;font-weight:bold;font-family:'Liberation Serif',serif">20</div>
<div class="t" style="left:722.2px;top:369.3px;font-size:9.5px">25</div>
<div class="t" style="left:844.2px;top:369.6px;font-size:9.5px;font-weight:bold;font-family:'Liberation Serif',serif">30</div>
<div class="t" style="left:966.2px;top:369.3px;font-size:9.5px">35</div>
<div class="t" style="left:50.5px;top:408.2px;font-size:9.5px">-5</div>
<div class="t" style="left:50.8px;top:529.6px;font-size:9.5px;font-weight:bold;font-family:'Liberation Serif',serif">0</div>
<div class="t" style="left:50.2px;top:651.3px;font-size:9.5px">5</div>
<div class="t" style="left:78.0px;top:393.49px;font-size:11px;letter-spacing:0.91px;">Simple example rocket</div>
<div class="t" style="left:78.0px;top:406.39px;font-size:11px;letter-spacing:0.95px;">Length 35 cm, max. diameter 2.5 cm</div>
<div class="t" style="left:78.0px;top:418.19px;font-size:11px;letter-spacing:0.96px;">Mass with no motors 30.9 g</div>
<div class="t" style="left:898.8px;top:393.09px;font-size:11px;letter-spacing:0.62px;">Stability:</div>
<div class="t" style="left:952.4px;top:393.09px;font-size:11px;letter-spacing:0.7px;">-5.79 cal</div>
<div class="t" style="left:926.9px;top:406.09px;font-size:11px;letter-spacing:-0.3px;">CG:</div>
<div class="t" style="left:954.3px;top:406.09px;font-size:11px;letter-spacing:1.0px;">19.2 cm</div>
<div class="t" style="left:929.2px;top:418.19px;font-size:11px;letter-spacing:-0.3px;">CP:</div>
<div class="t" style="left:954.3px;top:418.19px;font-size:11px;letter-spacing:1.0px;">4.71 cm</div>
<div class="t" style="left:932.1px;top:431.88px;font-size:9px;letter-spacing:1.0px;color:#808080">at M=0.30</div>
<div class="t" style="left:77.5px;top:647.09px;font-size:11px;letter-spacing:0.51px;color:#1c1c8c">Apogee:</div>
<div class="t" style="left:77.5px;top:660.39px;font-size:11px;letter-spacing:0.59px;color:#1c1c8c">Max. velocity:</div>
<div class="t" style="left:77.5px;top:673.09px;font-size:11px;letter-spacing:0.72px;color:#1c1c8c">Max. acceleration:</div>
<div class="t" style="left:184.8px;top:647.09px;font-size:11px;letter-spacing:-0.3px;color:#1c1c8c">N/A</div>
<div class="t" style="left:184.8px;top:660.39px;font-size:11px;letter-spacing:-0.3px;color:#1c1c8c">N/A</div>
<div class="t" style="left:184.8px;top:673.09px;font-size:11px;letter-spacing:-0.3px;color:#1c1c8c">N/A</div>
<div class="t" style="left:72.9px;top:697.86px;font-size:9.5px;letter-spacing:0.8px;">Click to select</div>
<div class="t" style="left:155.0px;top:697.86px;font-size:9.5px;letter-spacing:0.74px;">Shift+ click to select other</div>
<div class="t" style="left:296.2px;top:697.86px;font-size:9.5px;letter-spacing:0.75px;">Double-click to edit</div>
<div class="t" style="left:403.1px;top:697.86px;font-size:9.5px;letter-spacing:0.56px;">Click+ drag to move</div>
<svg class="a" style="left:0;top:0" width="1020" height="721" viewBox="0 0 1020 721">
<path d="M111 539 C 180 520, 260 508.5, 355.5 508.5" fill="none" stroke="#0000ff" stroke-width="1.1"/>
<path d="M111 539 C 180 558, 260 569.5, 355.5 569.5" fill="none" stroke="#0000ff" stroke-width="1.1"/>
<rect x="356" y="508.5" width="610.5" height="61" fill="none" stroke="#0000ff" stroke-width="2"/>
<circle cx="226" cy="539" r="6" fill="none" stroke="#ff0000" stroke-width="0.9"/>
<circle cx="226" cy="539" r="4.6" fill="#ff0000"/>
<circle cx="580" cy="539" r="6.2" fill="#fff" stroke="#0000ff" stroke-width="1"/>
<path d="M580 539 L580 532.8 A6.2 6.2 0 0 0 573.8 539 Z M580 539 L580 545.2 A6.2 6.2 0 0 0 586.2 539 Z" fill="#0000ff"/>
<circle cx="917" cy="411" r="4.2" fill="#fff" stroke="#0000ff" stroke-width="1"/>
<path d="M917 411 L917 406.8 A4.2 4.2 0 0 0 912.8 411 Z M917 411 L917 415.2 A4.2 4.2 0 0 0 921.2 411 Z" fill="#0000ff"/>
<circle cx="917" cy="423.4" r="4.3" fill="none" stroke="#ff8080" stroke-width="0.8"/>
<circle cx="917" cy="423.4" r="3.5" fill="#ff0000"/>
</svg></body></html>
